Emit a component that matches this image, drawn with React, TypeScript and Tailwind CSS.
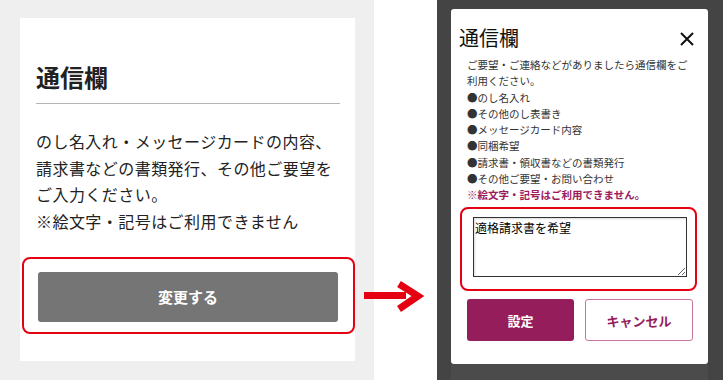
import React from 'react'

const jp = { fontFamily: '"Noto Sans CJK JP", "Noto Sans", sans-serif' }

const items = [
  '●のし名入れ',
  '●その他のし表書き',
  '●メッセージカード内容',
  '●同梱希望',
  '●請求書・領収書などの書類発行',
  '●その他ご要望・お問い合わせ',
]

export default function App() {
  return (
    <div className="relative flex w-[723px] h-[380px] overflow-hidden bg-white" style={jp}>
      {/* before */}
      <div className="w-[374px] h-full bg-[#efefef] pl-[20px] pt-[18px]">
        <div className="w-[335px] h-[343px] bg-white pl-[16px] pr-[15px] pt-[41px]">
          <h2 className="text-[24px] leading-[36px] font-bold text-[#222]">通信欄</h2>
          <div className="mt-[8px] h-px bg-[#b4b4b4]" />
          <p className="mt-[24px] text-[16px] leading-[26.7px] tracking-[0.45px] text-[#222]">
            のし名入れ・メッセージカードの内容、
            <br />
            請求書などの書類発行、その他ご要望を
            <br />
            ご入力ください。
            <br />
            ※絵文字・記号はご利用できません
          </p>
          <div className="mt-[22px] -ml-[14px] w-[333px] h-[77px] border-2 border-[#e50012] rounded-[8px] pl-[14px] pt-[13px]">
            <button className="w-[300px] h-[50px] rounded-[3px] bg-[#757575] text-white text-[15px] font-bold">
              変更する
            </button>
          </div>
        </div>
      </div>

      {/* gap */}
      <div className="w-[63px] h-full bg-white" />

      {/* after */}
      <div className="w-[286px] h-full bg-[#444444] pl-[14px] pt-[9px]">
        <div className="w-[257px] h-[355px] bg-white rounded-[3px] pt-[15px]">
          <div className="flex items-center justify-between pl-[8px] pr-[14px]">
            <h3 className="text-[20px] leading-[28px] text-[#111]">通信欄</h3>
            <svg width="14" height="14" viewBox="0 0 14 14" className="mt-[2px]">
              <path d="M1 1L13 13M13 1L1 13" stroke="#111" strokeWidth="2" />
            </svg>
          </div>
          <div className="mt-[5px] pl-[16px] w-[242px] text-[10.5px] leading-[16.25px] text-[#333]">
            <p>ご要望・ご連絡などがありましたら通信欄をご利用ください。</p>
            {items.map((t) => (
              <p key={t}>{t}</p>
            ))}
            <p className="font-bold text-[#9b1b5c]">※絵文字・記号はご利用できません。</p>
          </div>
          <div className="mt-[4px] ml-[9px] w-[237px] h-[84px] border-2 border-[#e50012] rounded-[8px] pl-[11px] pt-[8px]">
            <textarea
              readOnly
              defaultValue="適格請求書を希望"
              className="block w-[214px] h-[60px] border border-[#333] px-[1px] pt-[2px] text-[12px] leading-[16px] text-black outline-none shadow-[inset_1px_1px_2px_rgba(0,0,0,0.15)]"
              style={jp}
            />
          </div>
          <div className="mt-[8px] pl-[16px] flex gap-[11px]">
            <button className="w-[107px] h-[42px] rounded-[3px] bg-[#951d5b] text-white text-[13px] font-bold">
              設定
            </button>
            <button className="w-[108px] h-[42px] rounded-[3px] border border-[#c5769c] bg-white text-[#951d5b] text-[13px] font-bold">
              キャンセル
            </button>
          </div>
        </div>
        <div className="w-[257px] h-[16px] bg-[#4b4b4b]" />
      </div>

      {/* arrow */}
      <svg className="absolute left-[362px] top-[280px]" width="62" height="34" viewBox="0 0 62 34">
        <rect x="2" y="12" width="42" height="7" fill="#e50012" />
        <path d="M37 4L56 16L37 29" fill="none" stroke="#e50012" strokeWidth="7" strokeLinejoin="miter" />
      </svg>
    </div>
  )
}
